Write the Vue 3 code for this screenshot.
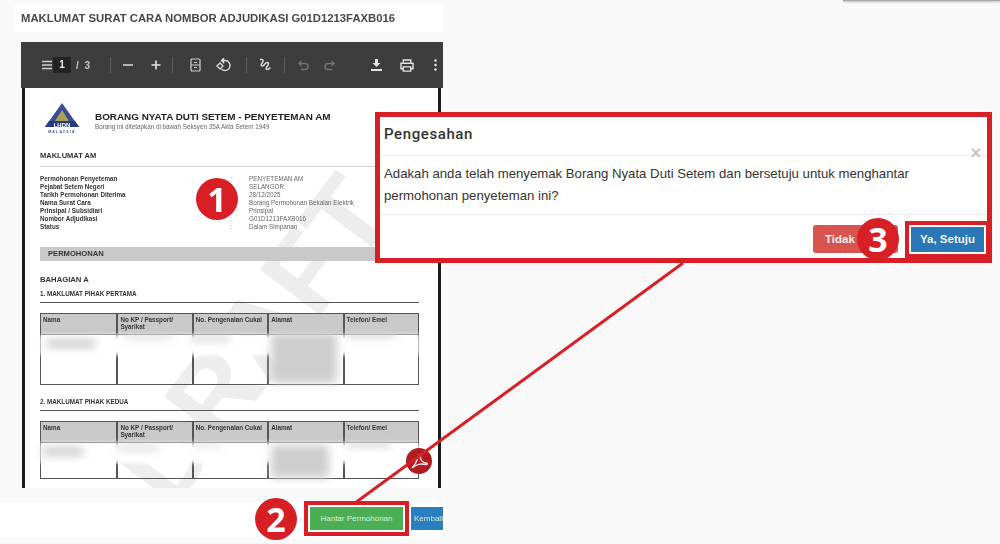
<script setup>
const metaRows = [
  ['Permohonan Penyeteman', 'PENYETEMAN AM'],
  ['Pejabat Setem Negeri', 'SELANGOR'],
  ['Tarikh Permohonan Diterima', '28/12/2025'],
  ['Nama Surat Cara', 'Borang Permohonan Bekalan Elektrik'],
  ['Prinsipal / Subsidiari', 'Prinsipal'],
  ['Nombor Adjudikasi', 'G01D1213FAXB016'],
  ['Status', 'Dalam Simpanan'],
]

const columns = ['Nama', 'No KP / Passport/ Syarikat', 'No. Pengenalan Cukai', 'Alamat', 'Telefon/ Emel']

const parties = [
  {
    title: '1. MAKLUMAT PIHAK PERTAMA',
    cls: 'first',
    smudges: [
      { left: 5, top: 4, width: 50, height: 9 },
      { left: 82, top: -1, width: 50, height: 4 },
      { left: 150, top: 1, width: 40, height: 5 },
      { left: 230, top: -2, width: 66, height: 50 },
      { left: 305, top: -4, width: 50, height: 6 },
    ],
  },
  {
    title: '2. MAKLUMAT PIHAK KEDUA',
    cls: 'second',
    smudges: [
      { left: 1, top: 4, width: 42, height: 9 },
      { left: 75, top: 3, width: 44, height: 4 },
      { left: 152, top: 0, width: 30, height: 3 },
      { left: 230, top: 2, width: 58, height: 33 },
      { left: 305, top: -1, width: 45, height: 5 },
    ],
  },
]
</script>

<template>
  <div class="screen">
    <div class="column">
      <div class="heading">MAKLUMAT SURAT CARA NOMBOR ADJUDIKASI G01D1213FAXB016</div>

      <div class="viewer">
        <div class="toolbar">
          <svg class="tool t-menu" width="10" height="10" viewBox="0 0 10 10"><path d="M0 1.5h10M0 5h10M0 8.500h10" stroke="#d0d0d0" stroke-width="1.600" /></svg>
          <span class="page-box">1</span>
          <span class="page-total">/ 3</span>
          <i class="sep s-1"></i>
          <svg class="tool t-minus" width="10" height="10" viewBox="0 0 10 10"><path d="M0 5h10" stroke="#cfcfcf" stroke-width="1.600" /></svg>
          <svg class="tool t-plus" width="10" height="10" viewBox="0 0 10 10"><path d="M0.500 5h9M5 0.500v9" stroke="#e4e4e4" stroke-width="1.600" /></svg>
          <i class="sep s-2"></i>
          <svg class="tool t-fit" width="11" height="14" viewBox="0 0 11 14" fill="none" stroke="#cfcfcf" stroke-width="1.200"><rect x="1" y="1" width="9" height="12" rx="1" /><path d="M1 7h9M4 4.500h3M4 9.500h3" /></svg>
          <svg class="tool t-rotate" width="16" height="15" viewBox="0 0 16 15" fill="none" stroke="#d8d8d8" stroke-width="1.400"><path d="M7 2.500h2a5 5 0 1 1-3.500 8.500" /><path d="M7.500 0.500v4l-2-2z" fill="#d8d8d8" /><path d="M4 5l3 3-3 3-3-3z" /></svg>
          <i class="sep s-3"></i>
          <svg class="tool t-draw" width="14" height="14" viewBox="0 0 14 14" fill="none" stroke="#d8d8d8" stroke-width="1.500"><path d="M2 1.500c3-.5 4 1 2.500 3s-2 3.500 0 3.500 2.500-3.500 4.500-3.500 2 2 .5 3.500-2 3.500-.5 3.500 2.500-1 3.500-2" /></svg>
          <i class="sep s-4"></i>
          <svg class="tool t-undo" width="11" height="11" viewBox="0 0 11 11" fill="none" stroke="#747574" stroke-width="1.400"><path d="M3.500 1L1 3.500 3.500 6" /><path d="M1 3.500h6a3 3 0 0 1 0 6H3" /></svg>
          <svg class="tool t-redo" width="11" height="11" viewBox="0 0 11 11" fill="none" stroke="#747574" stroke-width="1.400"><path d="M7.500 1L10 3.500 7.500 6" /><path d="M10 3.500H4a3 3 0 0 0 0 6h4" /></svg>
          <svg class="tool t-download" width="11" height="12" viewBox="0 0 11 12" fill="#e2e2e2"><path d="M4 0h3v4h2.500L5.500 8l-4-4H4z" /><path d="M0 10h11v2H0z" /></svg>
          <svg class="tool t-print" width="14" height="13" viewBox="0 0 15 14" fill="none" stroke="#e2e2e2" stroke-width="1.500"><path d="M3.500 4V1h8v3" /><path d="M3.500 10.500H1V4.500h13v6h-2.500" /><path d="M3.500 8.500h8v4.500h-8z" /></svg>
          <svg class="tool t-more" width="3" height="12" viewBox="0 0 3 12" fill="#e2e2e2"><circle cx="1.500" cy="1.500" r="1.300" /><circle cx="1.500" cy="6" r="1.300" /><circle cx="1.500" cy="10.500" r="1.300" /></svg>
        </div>

        <div class="sheet">
          <div class="watermark">DRAFT</div>

          <div class="doc-head">
            <svg class="logo" width="38" height="32" viewBox="0 0 38 32">
              <path d="M19 2L36 26H2z" fill="#3a4c98" />
              <path d="M19 9l7 11H12z" fill="#a9a24e" />
              <path d="M2 26h34l-4-6H6z" fill="#27397f" />
              <text x="19" y="25.500" text-anchor="middle" class="logo-name">LHDN</text>
              <text x="19" y="31.500" text-anchor="middle" class="logo-sub">MALAYSIA</text>
            </svg>
            <div class="doc-text">
              <div class="doc-title">BORANG NYATA DUTI SETEM - PENYETEMAN AM</div>
              <div class="doc-sub">Borang ini ditetapkan di bawah Seksyen 35A Akta Setem 1949</div>
            </div>
          </div>

          <div class="doc-section">MAKLUMAT AM</div>
          <div class="meta">
            <template v-for="row in metaRows" :key="row[0]">
              <span class="meta-label">{{ row[0] }}</span>
              <span class="meta-colon">:</span>
              <span class="meta-value">{{ row[1] }}</span>
            </template>
          </div>

          <div class="band">PERMOHONAN</div>
          <div class="part">BAHAGIAN A</div>

          <div v-for="party in parties" :key="party.title" class="party" :class="party.cls">
            <div class="party-title">{{ party.title }}</div>
            <div class="table">
              <div class="thead">
                <span v-for="col in columns" :key="col">{{ col }}</span>
              </div>
              <div class="tbody">
                <span v-for="col in columns" :key="col"></span>
                <i class="veil"></i>
                <i
                  v-for="(s, i) in party.smudges"
                  :key="i"
                  class="smudge"
                  :style="{ left: s.left + 'px', top: s.top + 'px', width: s.width + 'px', height: s.height + 'px' }"
                ></i>
              </div>
            </div>
          </div>
        </div>
      </div>

      <div class="actions">
        <button class="btn-green">Hantar Permohonan</button>
        <button class="btn-back">Kembali</button>
      </div>
    </div>

    <div class="top-edge"></div>

    <div class="pdf-badge">
      <svg width="26" height="26" viewBox="0 0 26 26">
        <circle cx="13" cy="13" r="13" fill="#b01c20" />
        <path d="M6 20c3-3 5-7 6.500-12 .5-2 2.500-1.500 2 .5-.5 3 1.500 6 5.500 6.500 2 .3 1.500 2-.5 1.500-4-1-7-.5-9.500 1-1.500.8-2.500 1.500-4 2.500z" fill="none" stroke="#f4e6e6" stroke-width="1.400" />
      </svg>
    </div>

    <svg class="overlay" width="1000" height="544" viewBox="0 0 1000 544">
      <path d="M683 263L355 503" stroke="#d81f26" stroke-width="3" />
    </svg>

    <div class="modal">
      <div class="modal-title">Pengesahan</div>
      <div class="modal-body">
        Adakah anda telah menyemak Borang Nyata Duti Setem dan bersetuju untuk menghantar permohonan penyeteman ini?
      </div>
      <div class="modal-foot">
        <button class="btn-no">Tidak Setuju</button>
        <button class="btn-yes">Ya, Setuju</button>
      </div>
      <span class="modal-close">×</span>
    </div>

    <span class="marker m-1">1</span>
    <span class="marker m-2">2</span>
    <span class="marker m-3">3</span>
  </div>
</template>

<style>
html,
body {
  margin: 0;
  background: #faf9f9;
}
</style>

<style scoped>
.screen {
  position: relative;
  width: 1000px;
  height: 544px;
  overflow: hidden;
  background: #faf9f9;
  font-family: "Liberation Sans", Arial, sans-serif;
}

.column {
  width: 443px;
  padding-top: 5px;
  filter: blur(0.5px);
}

.heading {
  margin-left: 15px;
  height: 27px;
  padding-left: 6px;
  background: #fff;
  color: #484848;
  font-size: 11.3px;
  font-weight: 700;
  line-height: 27px;
  white-space: nowrap;
}

.viewer {
  margin: 10px 0 0 21px;
  width: 422px;
}

.toolbar {
  display: flex;
  align-items: center;
  height: 46px;
  background: #3c3d3c;
  color: #d8d8d8;
  font-size: 10px;
  font-weight: 700;
}

.t-menu { margin-left: 21px; }
.page-box {
  width: 18px;
  height: 16px;
  margin-left: 1px;
  background: #232323;
  text-align: center;
  line-height: 16px;
  color: #eee;
}
.page-total { margin-left: 5px; color: #c8c8c8; word-spacing: 3px; }
.sep {
  width: 1px;
  height: 16px;
  background: #5c5d5c;
}
.s-1 { margin-left: 20px; }
.t-minus { margin-left: 12px; }
.t-plus { margin-left: 18px; }
.s-2 { margin-left: 11px; }
.t-fit { margin-left: 17px; }
.t-rotate { margin-left: 15px; }
.s-3 { margin-left: 14px; }
.t-draw { margin-left: 11px; }
.s-4 { margin-left: 12px; }
.t-undo { margin-left: 13px; }
.t-redo { margin-left: 15px; }
.t-download { margin-left: 36px; }
.t-print { margin-left: 18px; }
.t-more { margin-left: 20px; }

.sheet {
  position: relative;
  box-sizing: border-box;
  width: 419px;
  height: 400px;
  margin-left: 1px;
  padding: 13px 19px 0 15px;
  background: #fff;
  border-left: 3px solid #1c1c1c;
  border-right: 3px solid #1c1c1c;
  overflow: hidden;
}

.watermark {
  position: absolute;
  left: 43px;
  top: 197px;
  transform: rotate(-53deg);
  color: #ededed;
  font-size: 110px;
  font-weight: 700;
  line-height: 1;
}

.doc-head {
  position: relative;
  display: flex;
  gap: 14px;
  margin-left: 3px;
  height: 32px;
}
.logo { flex: none; }
.logo-name {
  fill: #fff;
  font-size: 6px;
  font-weight: 700;
}
.logo-sub {
  fill: #3a4c98;
  font-size: 3.500px;
  font-weight: 700;
  letter-spacing: 1.2px;
}
.doc-text { padding-top: 10px; }
.doc-title {
  color: #222;
  font-size: 9.900px;
  font-weight: 700;
  line-height: 11px;
  white-space: nowrap;
}
.doc-sub {
  margin-top: 1px;
  color: #666;
  font-size: 6.300px;
  line-height: 8px;
  white-space: nowrap;
}

.doc-section {
  position: relative;
  margin-top: 18px;
  padding-bottom: 6px;
  border-bottom: 1px solid #d6d6d6;
  color: #333;
  font-size: 7.500px;
  font-weight: 700;
  line-height: 9px;
}

.meta {
  position: relative;
  display: grid;
  grid-template-columns: 190px 19px 1fr;
  grid-auto-rows: 8px;
  margin-top: 8px;
  font-size: 6.300px;
  line-height: 8px;
}
.meta-label { color: #333; font-weight: 700; white-space: nowrap; }
.meta-colon { color: #666; }
.meta-value { color: #666; white-space: nowrap; }

.band {
  position: relative;
  height: 14px;
  margin-top: 16px;
  padding-left: 8px;
  background: #c9c9c9;
  color: #333;
  font-size: 7.600px;
  font-weight: 700;
  line-height: 14px;
}

.part {
  position: relative;
  margin-top: 14px;
  color: #333;
  font-size: 7.700px;
  font-weight: 700;
  line-height: 9px;
}

.party {
  position: relative;
}
.party-title {
  padding-bottom: 5px;
  border-bottom: 1px solid #555;
  color: #333;
  font-size: 6.300px;
  font-weight: 700;
  line-height: 7px;
}
.first { margin-top: 6px; }
.second { margin-top: 13px; }

.table {
  margin-top: 10px;
  border: 1.500px solid #555;
}
.thead,
.tbody {
  display: grid;
  grid-template-columns: repeat(5, 1fr);
}
.thead {
  height: 20px;
  background: #c9c9c9;
  border-bottom: 1px solid #555;
  color: #333;
  font-size: 6.300px;
  font-weight: 700;
  line-height: 7px;
}
.thead span {
  padding: 2px 1px 0 2px;
  border-left: 2px solid #555;
}
.thead span:first-child,
.tbody span:first-child {
  border-left: 0;
}
.tbody {
  position: relative;
}
.tbody span {
  border-left: 2px solid #555;
}
.first .tbody { height: 49px; }
.second .tbody { height: 35px; }

.veil {
  position: absolute;
  left: -1px;
  right: -1px;
  top: 0;
  height: 20px;
  background: #fff;
  filter: blur(2px);
}
.smudge {
  position: absolute;
  background: #cecece;
  border-radius: 4px;
  filter: blur(4px);
}

.actions {
  display: flex;
  justify-content: flex-end;
  align-items: flex-start;
  gap: 8px;
  height: 31px;
  margin-top: 14px;
  padding-top: 5px;
  background: #fff;
}
.actions button {
  height: 23px;
  padding: 0;
  border: 0;
  color: #d8eed8;
  font-family: inherit;
  font-size: 8px;
  white-space: nowrap;
}
.btn-green {
  width: 93px;
  background: #4cae54;
}
.btn-back {
  width: 32px;
  padding-left: 3px !important;
  background: #2a7fc1;
  text-align: left;
  overflow: hidden;
}

.top-edge {
  position: absolute;
  left: 843px;
  right: 0;
  top: 0;
  height: 1px;
  background: #a6a6a6;
  box-shadow: 0 1px 2px rgba(0, 0, 0, 0.35);
}

.overlay {
  position: absolute;
  left: 0;
  top: 0;
}

.pdf-badge {
  position: absolute;
  left: 406px;
  top: 448px;
  width: 26px;
  height: 26px;
}

.modal {
  position: absolute;
  left: 375px;
  top: 112px;
  box-sizing: border-box;
  width: 617px;
  height: 151px;
  border: 5px solid #d81f26;
  background: #fff;
  color: #333;
}
.modal-title {
  height: 38px;
  padding-left: 4px;
  border-bottom: 1px solid #eee;
  font-family: Roboto, "Liberation Sans", sans-serif;
  font-size: 15px;
  font-weight: 500;
  letter-spacing: 0.6px;
  line-height: 35px;
}
.modal-body {
  height: 51px;
  padding: 7px 40px 0 4px;
  border-bottom: 1px solid #eee;
  font-size: 13.200px;
  line-height: 22px;
}
.modal-foot {
  display: flex;
  justify-content: flex-end;
  align-items: center;
  gap: 13px;
  height: 38px;
  padding-top: 5px;
  padding-right: 3px;
}
.modal-foot button {
  padding: 0;
  border: 0;
  color: #f4f4f4;
  font-family: inherit;
  font-weight: 700;
}
.btn-no {
  width: 85px;
  height: 28px;
  background: #d9534f;
  border-radius: 3px;
  font-size: 11.500px;
  text-align: left;
  padding-left: 12px !important;
}
.btn-yes {
  width: 73px;
  height: 25px;
  background: #2a78b8;
  font-size: 11.500px;
}
.btn-yes,
.btn-green {
  outline: 4px solid #d81f26;
  outline-offset: 2px;
}
.modal-close {
  position: absolute;
  right: 6px;
  top: 26px;
  color: #c4c4c4;
  font-size: 18px;
  font-weight: 700;
  line-height: 20px;
}

.marker {
  position: absolute;
  width: 42px;
  height: 42px;
  border-radius: 50%;
  background: #d81f26;
  color: #fff;
  font-family: "Open Sans", "Liberation Sans", sans-serif;
  font-size: 34px;
  font-weight: 700;
  line-height: 42px;
  text-align: center;
}
.m-1 { left: 196px; top: 178px; }
.m-2 { left: 255px; top: 498px; }
.m-3 { left: 857px; top: 218px; }
</style>
